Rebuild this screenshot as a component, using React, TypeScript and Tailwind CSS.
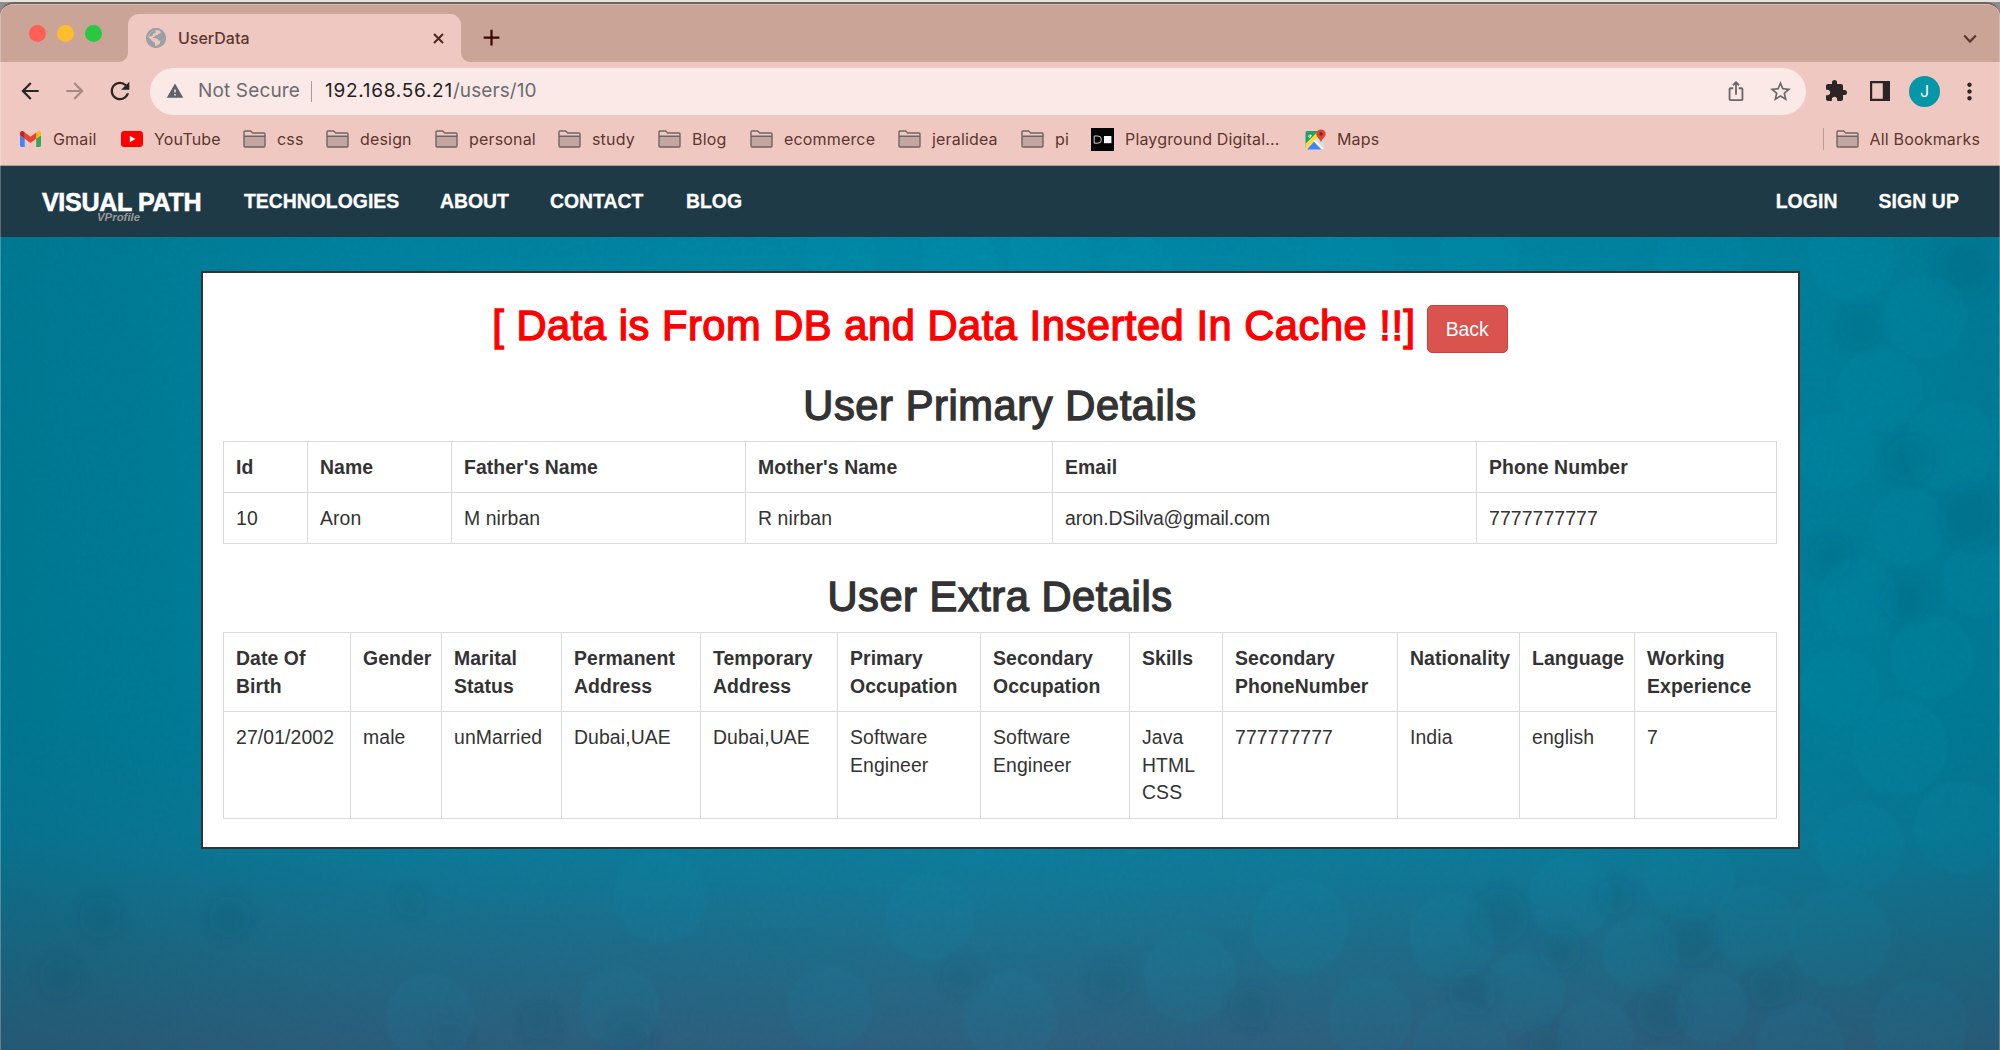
import React from "react";
import {
  MdAdd,
  MdArrowBack,
  MdArrowForward,
  MdExtension,
  MdIosShare,
  MdMoreVert,
  MdRefresh,
  MdStarBorder,
  MdWarning,
} from "react-icons/md";

function FolderIcon() {
  return (
    <svg width="23" height="19" viewBox="0 0 23 19" fill="none" className="block">
      <path d="M1 6.5h21V16a1 1 0 0 1-1 1H2a1 1 0 0 1-1-1z" fill="#c4a5a0" />
      <path
        d="M1 16V2a1 1 0 0 1 1-1h5.6l2.2 2H21a1 1 0 0 1 1 1v12a1 1 0 0 1-1 1H2a1 1 0 0 1-1-1zM1 6.2h21"
        stroke="#6d6563"
        strokeWidth="1.4"
      />
    </svg>
  );
}

function GlobeIcon() {
  return (
    <svg width="20" height="20" viewBox="0 0 20 20" className="block">
      <circle cx="10" cy="10" r="10" fill="#9aa0a6" />
      <path d="M9.6 2.2c2.2-.3 3.8.2 5.3 1.2-.1 1.5-.9 2.3-2.4 2.4-.6 1.2-1.7 1.4-2.9 1.5-.2 1.3-1.6 1.6-2.8 1.9.3 1.2 1.5 1 2.7 1 1.6.1 2.9.9 3 2.4 1.6.2 2.1 1.2 1.6 2.4-.6 1-1.8 1.6-2.8 2.8-1.1.1-1.7 0-2.2-.1.1-1.4.1-2.5-.4-3.2-1.2-.6-2.6-1.1-3.2-2.4L2.2 9C2.5 5.600 5.600 2.700 9.600 2.200z" fill="#efc9c1" />
      <path d="M9.200 2.100 4.600 4.600l-2 4 3.600-.4 1.200-2.600 2.400-.6z" fill="#9aa0a6" />
      <circle cx="10" cy="10" r="9" fill="none" stroke="#9aa0a6" strokeWidth="2" />
    </svg>
  );
}

function GmailIcon() {
  return (
    <svg width="21" height="16" viewBox="52 42 88 66" className="block">
      <path fill="#4285f4" d="M58 108h14V74L52 59v43c0 3.32 2.69 6 6 6" />
      <path fill="#34a853" d="M120 108h14c3.32 0 6-2.69 6-6V59l-20 15" />
      <path fill="#fbbc04" d="M120 48v26l20-15v-8c0-7.42-8.47-11.65-14.4-7.2" />
      <path fill="#ea4335" d="M72 74V48l24 18 24-18v26L96 92" />
      <path fill="#c5221f" d="M52 51v8l20 15V48l-5.6-4.2c-5.94-4.45-14.4-.22-14.4 7.2" />
    </svg>
  );
}

function YouTubeIcon() {
  return (
    <svg width="22" height="16" viewBox="0 0 22 16" className="block">
      <rect width="22" height="16" rx="3.2" fill="#ff0000" />
      <path d="M8.8 4.8v6.4l5.6-3.2z" fill="#fff" />
    </svg>
  );
}

function PlaygroundIcon() {
  return (
    <svg width="23" height="23" viewBox="0 0 23 23" className="block">
      <rect width="23" height="23" fill="#050505" />
      <path d="M3.2 8h3.6a3.6 3.6 0 0 1 0 7.2H3.2z" fill="none" stroke="#d0d0d0" strokeWidth="1" />
      <rect x="13" y="8" width="7.4" height="7.2" fill="#fff" />
    </svg>
  );
}

function MapsIcon() {
  return (
    <svg width="21" height="21" viewBox="0 0 21 21" className="block">
      <rect x="0.5" y="2" width="18" height="18.4" rx="1.8" fill="#dadce0" />
      <path d="M2.3 2h14L.5 18.6V3.8A1.8 1.8 0 0 1 2.3 2z" fill="#20a260" />
      <path d="M.5 14.8 12.2 3.2l3 3L.5 20.2z" fill="#ffd83a" />
      <path d="M9.6 12 18 20.4H2z" fill="#4285f4" />
      <path d="M9.6 10.4 18.6 19v1.4h-2L8.2 12z" fill="#fff" />
      <path d="M6.9 6.6H5v.9h.9c-.1.6-.5.9-1 .9a1.2 1.2 0 1 1 .8-2.1" fill="none" stroke="#fff" strokeWidth=".9" />
      <path d="M16 .4a4.7 4.7 0 0 0-4.7 4.7c0 3.4 3.6 4.4 4.7 8.4 1.1-4 4.700-5 4.700-8.400A4.700 4.700 0 0 0 16 .4z" fill="#db4437" />
      <circle cx="16" cy="5" r="1.7" fill="#7b231c" />
    </svg>
  );
}

const bookmarks = [
  { label: "Gmail", icon: <GmailIcon />, width: "w-[101px]", gap: "gap-[12px]" },
  { label: "YouTube", icon: <YouTubeIcon />, width: "w-[122px]", gap: "gap-[11px]" },
  { label: "css", icon: <FolderIcon />, width: "w-[83px]", gap: "gap-[11px]" },
  { label: "design", icon: <FolderIcon />, width: "w-[109px]", gap: "gap-[11px]" },
  { label: "personal", icon: <FolderIcon />, width: "w-[123px]", gap: "gap-[11px]" },
  { label: "study", icon: <FolderIcon />, width: "w-[100px]", gap: "gap-[11px]" },
  { label: "Blog", icon: <FolderIcon />, width: "w-[92px]", gap: "gap-[11px]" },
  { label: "ecommerce", icon: <FolderIcon />, width: "w-[148px]", gap: "gap-[11px]" },
  { label: "jeralidea", icon: <FolderIcon />, width: "w-[123px]", gap: "gap-[11px]" },
  { label: "pi", icon: <FolderIcon />, width: "w-[70px]", gap: "gap-[11px]" },
  { label: "Playground Digital...", icon: <PlaygroundIcon />, width: "w-[214px]", gap: "gap-[11px]" },
  { label: "Maps", icon: <MapsIcon />, width: "w-[80px]", gap: "gap-[11px]" },
];

function TabStrip() {
  return (
    <div className="flex h-[58px] items-end bg-[#cba498]">
      <div className="flex h-[58px] w-[119px] gap-[11px] pl-[29px] pt-[21px]">
        <span className="size-[17px] rounded-full bg-[#ff5f57]" />
        <span className="size-[17px] rounded-full bg-[#febc2e]" />
        <span className="size-[17px] rounded-full bg-[#28c840]" />
      </div>
      <div className="h-[9px] w-[9px] bg-[#efc9c1]">
        <div className="size-full rounded-br-[9px] bg-[#cba498]" />
      </div>
      <div className="flex h-[48px] w-[333px] items-center rounded-t-[11px] bg-[#efc9c1] pl-[18px]">
        <GlobeIcon />
        <span className="ml-[12px] grow font-['Inter',sans-serif] text-[16px] font-medium text-[#5c362f]">UserData</span>
        <svg width="11" height="11" viewBox="0 0 11 11" className="mr-[17px]">
          <path d="M1 1l9 9M10 1l-9 9" stroke="#4d261f" strokeWidth="2" />
        </svg>
      </div>
      <div className="h-[9px] w-[9px] bg-[#efc9c1]">
        <div className="size-full rounded-bl-[9px] bg-[#cba498]" />
      </div>
      <MdAdd className="mb-[11px] ml-[8px] size-[27px] text-[#3c0804]" />
      <svg width="14" height="10" viewBox="0 0 14 10" fill="none" className="mb-[18px] ml-auto mr-[23px]">
        <path d="M1.2 1.6 7 7.6l5.8-6" stroke="#5c362f" strokeWidth="2.2" />
      </svg>
    </div>
  );
}

function Toolbar() {
  return (
    <div className="flex h-[59px] items-center bg-[#efc9c1] pb-px pl-[17px] font-['Inter',sans-serif]">
      <MdArrowBack className="size-[26px] text-[#2b2625]" />
      <MdArrowForward className="ml-[19px] size-[26px] text-[#a58983]" />
      <MdRefresh className="ml-[18px] size-[28px] text-[#2b2625]" />
      <div className="ml-[16px] flex h-[47px] w-[1656px] items-center rounded-full bg-[#fae9e7] pl-[16px] pr-[13px]">
        <MdWarning className="size-[18px] text-[#5f6368]" />
        <span className="ml-[14px] text-[19px] tracking-[0.15px] text-[#6b6c70]">Not Secure</span>
        <span className="ml-[11px] h-[21px] w-px bg-[#a39b9c]" />
        <span className="ml-[13px] text-[19px] tracking-[0.72px] text-[#1f1f21]">192.168.56.21</span>
        <span className="grow text-[19px] tracking-[0.1px] text-[#6b6c70]">/users/10</span>
        <MdIosShare className="size-[22px] text-[#6b6667]" />
        <MdStarBorder className="ml-[21px] size-[25px] text-[#6b6667]" />
      </div>
      <MdExtension className="ml-[18px] size-[24px] text-[#2b2625]" />
      <svg width="20" height="20" viewBox="0 0 20 20" className="ml-[22px]">
        <path d="M0 0h20v20H0zM2.2 2.2v15.6h10.6V2.2z" fillRule="evenodd" fill="#2b2625" />
      </svg>
      <span className="ml-[19px] flex size-[31px] items-center justify-center rounded-full bg-[#0597a7] text-[16px] text-white">
        J
      </span>
      <MdMoreVert className="ml-[16px] size-[27px] text-[#2b2625]" />
    </div>
  );
}

function BookmarksBar() {
  return (
    <div className="flex h-[45px] items-center border-b border-[#b39c97] bg-[#efc9c1] pb-[8px] pl-[20px] font-['Inter',sans-serif] text-[16px] tracking-[0.17px] text-[#5c362f]">
      {bookmarks.map((b) => (
        <div key={b.label} className={"flex shrink-0 items-center whitespace-nowrap " + b.width + " " + b.gap}>
          {b.icon}
          <span>{b.label}</span>
        </div>
      ))}
      <span className="ml-auto h-[22px] w-px bg-[#bf9d96]" />
      <div className="ml-[12px] mr-[20px] flex items-center gap-[11px]">
        <FolderIcon />
        <span>All Bookmarks</span>
      </div>
    </div>
  );
}

function SiteNav() {
  return (
    <nav className="flex h-[71px] items-center bg-[#1e3a46] pl-[42px] pr-[41px] font-['Liberation_Sans',Arial,sans-serif] text-[19.4px] font-bold text-white [-webkit-text-stroke:0.3px_#fff]">
      <div className="relative w-[202px] text-[25px] leading-[28px] tracking-[-0.3px] [-webkit-text-stroke:0.6px_#fff]">
        VISUAL PATH
        <span className="absolute left-[55px] top-[22px] text-[11.4px] italic leading-[14px] tracking-normal text-[#999] [-webkit-text-stroke:0px]">
          VProfile
        </span>
      </div>
      <span className="w-[196px]">TECHNOLOGIES</span>
      <span className="w-[110px]">ABOUT</span>
      <span className="w-[136px]">CONTACT</span>
      <span>BLOG</span>
      <span className="ml-auto tracking-[0.1px]">LOGIN</span>
      <span className="ml-[41px] tracking-[0.1px]">SIGN UP</span>
    </nav>
  );
}

// Overlapping discs of the page's backdrop, as [cx, cy, r] in page coordinates.
const lightDiscs = [
  [1852, 20, 44], [1925, 80, 42], [1880, 152, 42], [1835, 215, 40], [1950, 210, 46],
  [1908, 290, 38], [1980, 342, 38], [1858, 362, 40], [1932, 420, 42], [1840, 450, 40],
  [1900, 510, 48], [1960, 590, 46], [1452, 700, 43], [1570, 660, 42], [1525, 754, 40], [1640, 716, 38],
  [1712, 772, 36], [1595, 800, 38], [1690, 640, 44], [1755, 690, 42], [1665, 850, 40], [1840, 700, 50],
  [1460, 810, 46], [1800, 810, 44], [1920, 790, 48], [1860, 610, 44],
  [840, 20, 36], [960, 28, 38], [1050, 18, 42], [1140, 34, 34],
  [1350, 22, 44], [1480, 14, 38], [1700, 18, 44],
  [660, 660, 46], [430, 780, 44], [620, 770, 40], [830, 770, 42], [930, 680, 44],
  [1010, 780, 46], [1190, 740, 46], [1300, 690, 48], [1370, 780, 42],
] as const;

const darkDiscs = [
  [1965, 30, 20], [1860, 90, 14], [1910, 222, 16], [1970, 280, 20], [1905, 362, 16], [1830, 320, 14],
  [1500, 680, 19], [1560, 712, 14], [1690, 702, 18], [1615, 660, 12], [1770, 750, 14], [1472, 755, 16],
  [1662, 775, 17], [1550, 810, 14], [230, 680, 14], [410, 665, 10], [100, 680, 14], [60, 740, 14],
  [540, 785, 12], [630, 800, 14], [450, 800, 12], [960, 740, 12], [1110, 745, 14], [1250, 770, 14],
] as const;

function Backdrop() {
  return (
    <svg width="2000" height="813" viewBox="0 0 2000 813" className="absolute inset-0">
      <defs>
        <filter id="soften" x="-5%" y="-5%" width="110%" height="110%">
          <feGaussianBlur stdDeviation="1.5" />
        </filter>
        <filter id="smudge" x="-5%" y="-5%" width="110%" height="110%">
          <feGaussianBlur stdDeviation="9" />
        </filter>
        <filter id="grain" x="0" y="0" width="100%" height="100%">
          <feTurbulence type="fractalNoise" baseFrequency="0.22" numOctaves="2" />
          <feColorMatrix values="0 0 0 0 0  0 0 0 0 0.1  0 0 0 0 0.14  0.5 0 0 0 -0.14" />
        </filter>
      </defs>
      <g fill="#063f4c" fillOpacity="0.1" filter="url(#smudge)">
        {darkDiscs.map(([x, y, r], i) => (
          <circle key={i} cx={x} cy={y} r={r * 1.5} />
        ))}
      </g>
      <g fill="#13a3c4" fillOpacity="0.06" filter="url(#soften)">
        {lightDiscs.map(([x, y, r], i) => (
          <circle key={i} cx={x} cy={y} r={r} />
        ))}
      </g>
      <rect width="2000" height="813" filter="url(#grain)" opacity="0.25" />
    </svg>
  );
}

function DataTable({
  cols,
  head,
  row,
  headHeight,
  rowHeight,
}: {
  cols: string[];
  head: string[];
  row: string[];
  headHeight: string;
  rowHeight: string;
}) {
  return (
    <table className="w-[1553px] table-fixed border-collapse text-left align-top text-[19.4px] leading-[27.7px] text-[#333]">
      <colgroup>
        {cols.map((w, i) => (
          <col key={i} className={w} />
        ))}
      </colgroup>
      <thead>
        <tr className={headHeight}>
          {head.map((t, i) => (
            <th
              key={i}
              className="whitespace-pre border border-[#dadada] pl-[12px] pt-[12px] align-top font-bold tracking-[0.08px]"
            >
              {t}
            </th>
          ))}
        </tr>
      </thead>
      <tbody>
        <tr className={rowHeight}>
          {row.map((t, i) => (
            <td
              key={i}
              className={
                "whitespace-pre border border-[#dadada] pl-[12px] pt-[12px] align-top " +
                (t.includes("@") ? "tracking-[-0.15px]" : "tracking-[0.1px]")
              }
            >
              {t}
            </td>
          ))}
        </tr>
      </tbody>
    </table>
  );
}

function UserCard() {
  return (
    <main className="relative mx-auto mt-[34px] flex h-[578px] w-[1599px] flex-col items-center border-2 border-[#333] bg-white font-['Liberation_Sans',Arial,sans-serif]">
      <div className="mt-[30px] flex h-[56px] items-start">
        <h2 className="whitespace-pre text-[41.6px] leading-[46px] tracking-[0.55px] text-[#ff0000] [-webkit-text-stroke:1.4px_#ff0000]">
          [ Data is From DB and Data Inserted In Cache !!]
        </h2>
        <button className="ml-[11px] mt-[2px] h-[48px] w-[81px] rounded-[5px] border border-[#d43f3a] bg-[#d9534f] pt-px text-[19.4px] text-white">
          Back
        </button>
      </div>
      <h2 className="mt-[24px] h-[58px] text-[41.6px] leading-[46px] tracking-[0.6px] text-[#333] [-webkit-text-stroke:1.4px_#333]">
        User Primary Details
      </h2>
      <DataTable
        cols={["w-[84px]", "w-[144px]", "w-[294px]", "w-[307px]", "w-[424px]", "w-[300px]"]}
        head={["Id", "Name", "Father's Name", "Mother's Name", "Email", "Phone Number"]}
        row={["10", "Aron", "M nirban", "R nirban", "aron.DSilva@gmail.com", "7777777777"]}
        headHeight="h-[51px]"
        rowHeight="h-[51px]"
      />
      <h2 className="mt-[30px] h-[58px] text-[41.6px] leading-[46px] tracking-[0.55px] text-[#333] [-webkit-text-stroke:1.4px_#333]">
        User Extra Details
      </h2>
      <DataTable
        cols={[
          "w-[127px]", "w-[91px]", "w-[120px]", "w-[139px]", "w-[137px]", "w-[143px]",
          "w-[149px]", "w-[93px]", "w-[175px]", "w-[122px]", "w-[115px]", "w-[142px]",
        ]}
        head={[
          "Date Of\nBirth", "Gender", "Marital\nStatus", "Permanent\nAddress", "Temporary\nAddress", "Primary\nOccupation",
          "Secondary\nOccupation", "Skills", "Secondary\nPhoneNumber", "Nationality", "Language", "Working\nExperience",
        ]}
        row={[
          "27/01/2002", "male", "unMarried", "Dubai,UAE", "Dubai,UAE", "Software\nEngineer",
          "Software\nEngineer", "Java\nHTML\nCSS", "777777777", "India", "english", "7",
        ]}
        headHeight="h-[79px]"
        rowHeight="h-[107px]"
      />
    </main>
  );
}

export default function App() {
  return (
    <div className="h-[1050px] w-[2000px] overflow-hidden bg-[#8f8f8c]">
      <div className="h-[2px] bg-[#e6e3dc]" />
      <div className="relative flex h-[1048px] flex-col overflow-hidden rounded-t-[14px] border-t-2 border-[#6e6360] bg-[#cba498]">
        <TabStrip />
        <Toolbar />
        <BookmarksBar />
        <SiteNav />
        <div className="relative flex h-[813px] flex-col bg-[linear-gradient(90deg,rgba(0,50,60,0.18)_0%,rgba(0,50,60,0.06)_20%,rgba(0,50,60,0)_50%,rgba(0,50,60,0.05)_80%,rgba(0,50,60,0.15)_100%),linear-gradient(180deg,#0088a6_0%,#0086a4_58%,#0b80a0_74%,#1f6f8d_87%,#30607f_100%)]">
          <Backdrop />
          <UserCard />
        </div>
        <div className="pointer-events-none absolute inset-0 rounded-t-[12px] border-x border-t border-white/25" />
      </div>
    </div>
  );
}
